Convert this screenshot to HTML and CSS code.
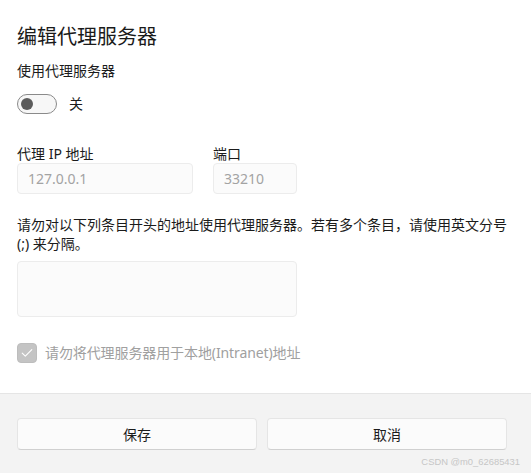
FILE: index.html
```html
<!DOCTYPE html>
<html lang="zh-CN">
<head>
<meta charset="utf-8">
<title>编辑代理服务器</title>
<link rel="stylesheet" href="styles.css">
</head>
<body>
<div class="dialog">
  <div class="content">
    <h1 class="title">编辑代理服务器</h1>
    <div class="subtitle">使用代理服务器</div>
    <div class="toggle-row">
      <span class="toggle"><span class="knob"></span></span>
      <span class="toggle-label">关</span>
    </div>
    <div class="fields">
      <div class="field field-ip">
        <div class="label">代理 IP 地址</div>
        <div class="input">127.0.0.1</div>
      </div>
      <div class="field field-port">
        <div class="label">端口</div>
        <div class="input">33210</div>
      </div>
    </div>
    <p class="desc">请勿对以下列条目开头的地址使用代理服务器。若有多个条目，请使用英文分号 (;) 来分隔。</p>
    <div class="textarea"></div>
    <div class="check-row">
      <span class="checkbox">
        <svg width="12" height="10" viewBox="0 0 12 10"><path d="M1.2 5.2 L4.3 8.2 L10.8 1.6" fill="none" stroke="#ffffff" stroke-width="1.1" stroke-linecap="round" stroke-linejoin="round"/></svg>
      </span>
      <span class="check-label">请勿将代理服务器用于本地(Intranet)地址</span>
    </div>
  </div>
  <div class="footer">
    <button class="btn">保存</button>
    <button class="btn">取消</button>
  </div>
  <div class="watermark">CSDN @m0_62685431</div>
</div>
</body>
</html>
```
FILE: styles.css
```css
html, body {
  margin: 0;
  padding: 0;
  background: #ffffff;
}
body {
  font-family: "Noto Sans", "Noto Sans CJK SC", sans-serif;
  color: #1b1b1b;
}
.dialog {
  position: relative;
  width: 531px;
  height: 473px;
  display: flex;
  flex-direction: column;
  overflow: hidden;
}
.content {
  flex: 1;
  padding: 23px 24px 0 17px;
}
.title {
  margin: 0;
  font-size: 20px;
  line-height: 28px;
  font-weight: 400;
  color: #1a1a1a;
}
.subtitle {
  margin-top: 10px;
  font-size: 14px;
  line-height: 20px;
}
.toggle-row {
  margin-top: 13px;
  display: flex;
  align-items: center;
  height: 20px;
}
.toggle {
  box-sizing: border-box;
  width: 40px;
  height: 20px;
  border: 1px solid #8a8a8a;
  border-radius: 10px;
  background: #f7f7f7;
  display: flex;
  align-items: center;
  padding-left: 3px;
}
.knob {
  width: 12px;
  height: 12px;
  border-radius: 50%;
  background: #5c5c5c;
}
.toggle-label {
  margin-left: 12px;
  font-size: 14px;
  line-height: 20px;
}
.fields {
  margin-top: 30px;
  display: flex;
  gap: 20px;
}
.field-ip { width: 176px; }
.field-port { width: 84px; }
.label {
  font-size: 14px;
  line-height: 19px;
}
.input {
  box-sizing: border-box;
  height: 31px;
  border: 1px solid #ececec;
  border-radius: 4px;
  background: #fbfbfb;
  padding-left: 10px;
  font-size: 14px;
  line-height: 29px;
  color: #a3a3a3;
}
.desc {
  margin: 21px 0 0 0;
  font-size: 14px;
  line-height: 19px;
}
.textarea {
  box-sizing: border-box;
  margin-top: 8px;
  width: 280px;
  height: 56px;
  border: 1px solid #ececec;
  border-radius: 4px;
  background: #fbfbfb;
}
.check-row {
  margin-top: 26px;
  display: flex;
  align-items: center;
  height: 20px;
}
.checkbox {
  box-sizing: border-box;
  width: 20px;
  height: 20px;
  border-radius: 4px;
  background: #c4c4c4;
  border: 1px solid #bdbdbd;
  display: flex;
  align-items: center;
  justify-content: center;
}
.check-label {
  margin-left: 8px;
  font-size: 14px;
  line-height: 20px;
  color: #a0a0a0;
  letter-spacing: -0.1px;
}
.footer {
  box-sizing: border-box;
  height: 80px;
  border-top: 1px solid #e5e5e5;
  background: #f3f3f3;
  padding: 24px 24px 0 17px;
  display: grid;
  grid-template-columns: 1fr 1fr;
  column-gap: 10px;
  align-items: start;
}
.btn {
  box-sizing: border-box;
  height: 32px;
  border: 1px solid #e5e5e5;
  border-bottom-color: #d0d0d0;
  border-radius: 4px;
  background: #fbfbfb;
  font-family: "Noto Sans", "Noto Sans CJK SC", sans-serif;
  font-size: 14px;
  color: #1b1b1b;
  padding: 0;
}
.watermark {
  position: absolute;
  right: 11px;
  bottom: 5px;
  font-family: "Liberation Sans", "Noto Sans", sans-serif;
  font-size: 9.4px;
  line-height: 12px;
  color: #c6c6c6;
}
```
